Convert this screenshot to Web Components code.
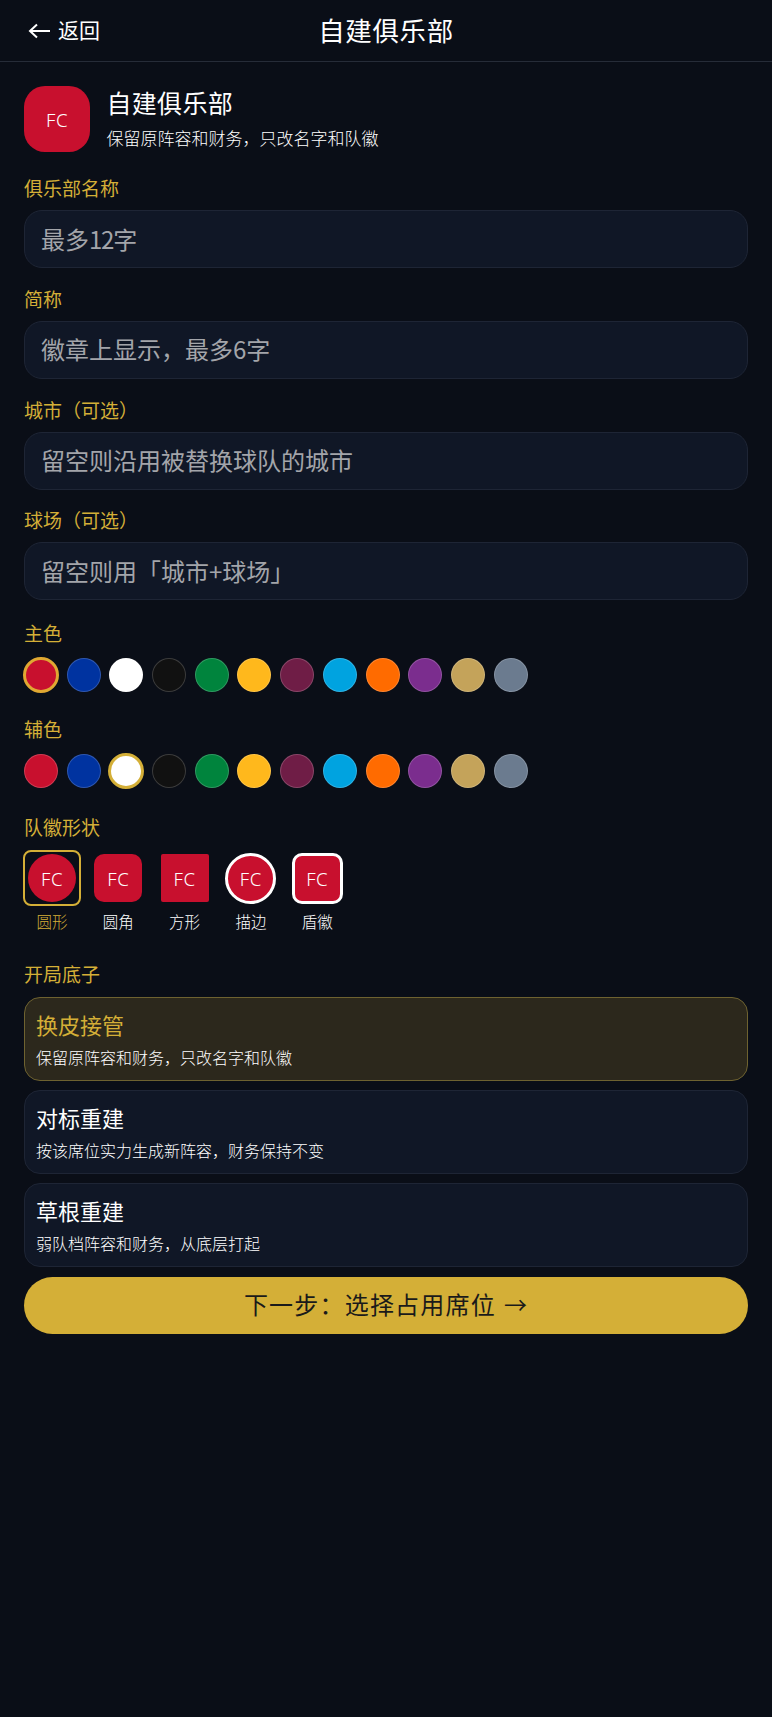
<!DOCTYPE html>
<html lang="zh-CN">
<head>
<meta charset="utf-8">
<title>自建俱乐部</title>
<style>
    html, body {
        margin: 0;
        background: #0a0e17;
    }
    body {
        min-height: 1717px;
        color: #fff;
        font-family: "Noto Sans CJK SC", "Noto Sans", sans-serif;
    }
    main {
        display: block;
        padding: 24px 24px 0;
    }
</style>
</head>
<body>
<top-bar back="返回">自建俱乐部</top-bar>
<main>
    <club-intro heading="自建俱乐部">保留原阵容和财务，只改名字和队徽</club-intro>

    <form-field label="俱乐部名称">最多<span style="letter-spacing: -1.2px">12</span>字</form-field>
    <form-field label="简称">徽章上显示，最多6字</form-field>
    <form-field label="城市（可选）">留空则沿用被替换球队的城市</form-field>
    <form-field label="球场（可选）">留空则用「城市+球场」</form-field>

    <color-row label="主色" selected="0" ring="#e0a832"></color-row>
    <color-row label="辅色" selected="2" ring="#d4af37"></color-row>

    <shape-picker label="队徽形状" selected="0"></shape-picker>

    <section-label style="margin-top: 28px">开局底子</section-label>
    <start-option heading="换皮接管" active>保留原阵容和财务，只改名字和队徽</start-option>
    <start-option heading="对标重建">按该席位实力生成新阵容，财务保持不变</start-option>
    <start-option heading="草根重建">弱队档阵容和财务，从底层打起</start-option>

    <next-button>下一步：选择占用席位<span slot="arrow">→</span></next-button>
</main>

<script>
const COLORS = ['#c8102e', '#0033a0', '#ffffff', '#111111', '#00843d', '#ffb81c',
    '#6f1d46', '#00a3e0', '#ff6b00', '#7b2d8e', '#c4a35a', '#6b7b8f'];
const SHAPES = [
    { name: '圆形', cls: 'circle' },
    { name: '圆角', cls: 'rounded' },
    { name: '方形', cls: 'square' },
    { name: '描边', cls: 'ring' },
    { name: '盾徽', cls: 'shield' }
];

class TopBar extends HTMLElement {
    constructor() {
        super();
        this.attachShadow({ mode: 'open' });
    }

    connectedCallback() {
        this.shadowRoot.innerHTML = `
            <style>
                :host {
                    display: grid;
                    grid-template-columns: 1fr auto 1fr;
                    align-items: center;
                    height: 61px;
                    padding: 0 28px;
                    border-bottom: 1px solid #262c38;
                }
                .back {
                    display: flex;
                    align-items: center;
                    gap: 8px;
                    font-size: 21px;
                }
                .back span {
                    margin-top: -3px;
                }
                svg {
                    width: 22px;
                    height: 16px;
                }
                .title {
                    font-size: 26.5px;
                    letter-spacing: .6px;
                    margin-top: -2px;
                }
            </style>
            <div class="back">
                <svg viewBox="0 0 22 16" fill="none" stroke="#fff" stroke-width="2">
                    <path d="M22 8H2M9 1.5 2 8l7 6.5"/>
                </svg>
                <span>${this.getAttribute('back')}</span>
            </div>
            <div class="title"><slot></slot></div>
        `;
    }
}

class ClubIntro extends HTMLElement {
    constructor() {
        super();
        this.attachShadow({ mode: 'open' });
    }

    connectedCallback() {
        this.shadowRoot.innerHTML = `
            <style>
                :host {
                    display: flex;
                    gap: 16.5px;
                    align-items: center;
                    height: 66px;
                    margin-bottom: 22px;
                }
                .logo {
                    width: 66px;
                    height: 66px;
                    border-radius: 21px;
                    background: #c8102e;
                    display: grid;
                    place-items: center;
                    font: 300 18.5px "Noto Sans", sans-serif;
                    letter-spacing: .6px;
                }
                .heading {
                    font-size: 25px;
                    line-height: 36px;
                    letter-spacing: .3px;
                    margin-top: -1px;
                }
                .sub {
                    font-size: 17px;
                    font-weight: 300;
                    line-height: 30px;
                    margin-top: 3px;
                }
            </style>
            <div class="logo">FC</div>
            <div>
                <div class="heading">${this.getAttribute('heading')}</div>
                <div class="sub"><slot></slot></div>
            </div>
        `;
    }
}

class SectionLabel extends HTMLElement {
    constructor() {
        super();
        this.attachShadow({ mode: 'open' });
        this.shadowRoot.innerHTML = `
            <style>
                :host {
                    display: block;
                    height: 28px;
                    line-height: 28px;
                    font-size: 19px;
                    color: #d4af37;
                    margin-bottom: 9px;
                }
            </style>
            <slot></slot>
        `;
    }
}

class FormField extends HTMLElement {
    constructor() {
        super();
        this.attachShadow({ mode: 'open' });
    }

    connectedCallback() {
        this.shadowRoot.innerHTML = `
            <style>
                :host {
                    display: block;
                    margin-bottom: 16.8px;
                }
                section-label {
                    margin-bottom: 8px;
                }
                .box {
                    box-sizing: border-box;
                    height: 58px;
                    padding: 0 16px 2px;
                    display: flex;
                    align-items: center;
                    background: #101726;
                    border: 1.5px solid #1e2535;
                    border-radius: 18px;
                    font-size: 24px;
                    color: #a3a5aa;
                }
            </style>
            <section-label>${this.getAttribute('label')}</section-label>
            <div class="box"><span><slot></slot></span></div>
        `;
    }
}

class ColorRow extends HTMLElement {
    constructor() {
        super();
        this.attachShadow({ mode: 'open' });
    }

    connectedCallback() {
        const selected = parseInt(this.getAttribute('selected'));
        const dots = COLORS.map((color, i) => {
            const cls = i === selected ? 'dot on' : 'dot';
            return `<span class="${cls}" style="background:${color}"></span>`;
        }).join('');
        this.shadowRoot.innerHTML = `
            <style>
                :host {
                    display: block;
                    margin-top: 18.6px;
                    margin-bottom: 23px;
                }
                section-label {
                    margin-bottom: 11px;
                }
                .row {
                    display: flex;
                    gap: 8.7px;
                }
                .dot {
                    box-sizing: border-box;
                    width: 34px;
                    height: 34px;
                    border-radius: 50%;
                    border: 1px solid rgba(255, 255, 255, .18);
                }
                .dot.on {
                    width: 36px;
                    height: 36px;
                    margin: -1px;
                    border: 3px solid ${this.getAttribute('ring')};
                }
            </style>
            <section-label>${this.getAttribute('label')}</section-label>
            <div class="row">${dots}</div>
        `;
    }
}

class ShapePicker extends HTMLElement {
    constructor() {
        super();
        this.attachShadow({ mode: 'open' });
    }

    connectedCallback() {
        const selected = parseInt(this.getAttribute('selected'));
        const items = SHAPES.map((shape, i) => `
            <div class="item ${i === selected ? 'on' : ''}">
                <div class="frame"><div class="badge ${shape.cls}">FC</div></div>
                <div class="name">${shape.name}</div>
            </div>
        `).join('');
        this.shadowRoot.innerHTML = `
            <style>
                :host {
                    display: block;
                    margin-top: 25px;
                }
                .row {
                    display: flex;
                    gap: 8.3px;
                    margin-left: -1px;
                }
                .item {
                    width: 58px;
                    text-align: center;
                }
                .frame {
                    box-sizing: border-box;
                    height: 56px;
                    padding-top: 1px;
                    display: grid;
                    place-items: center;
                    border: 2.5px solid transparent;
                    border-radius: 8px;
                }
                .on .frame {
                    border-color: #d4af37;
                }
                .badge {
                    box-sizing: border-box;
                    width: 48px;
                    height: 48px;
                    display: grid;
                    place-items: center;
                    background: #c8102e;
                    font: 300 18.5px "Noto Sans", sans-serif;
                    letter-spacing: .6px;
                }
                .circle { border-radius: 50%; }
                .rounded { border-radius: 10px; }
                .square { border-radius: 2px; }
                .ring, .shield {
                    width: 51px;
                    height: 51px;
                    border: 3.5px solid #fff;
                }
                .ring { border-radius: 50%; }
                .shield { border-radius: 10px; }
                .name {
                    margin-top: 4px;
                    font-size: 15.5px;
                    font-weight: 300;
                    line-height: 22px;
                }
                .on .name {
                    color: #d4af37;
                }
            </style>
            <section-label>${this.getAttribute('label')}</section-label>
            <div class="row">${items}</div>
        `;
    }
}

class StartOption extends HTMLElement {
    constructor() {
        super();
        this.attachShadow({ mode: 'open' });
    }

    connectedCallback() {
        this.shadowRoot.innerHTML = `
            <style>
                :host {
                    display: block;
                    box-sizing: border-box;
                    height: 84px;
                    margin-bottom: 9px;
                    padding: 9px 11px 0;
                    background: #101726;
                    border: 1.5px solid #1e2535;
                    border-radius: 16px;
                }
                :host([active]) {
                    background: #2c281c;
                    border-color: #6e6230;
                }
                .heading {
                    font-size: 22px;
                    line-height: 34px;
                }
                :host([active]) .heading {
                    color: #d4af37;
                }
                .sub {
                    font-size: 16px;
                    font-weight: 300;
                    line-height: 26px;
                    margin-top: 3px;
                }
            </style>
            <div class="heading">${this.getAttribute('heading')}</div>
            <div class="sub"><slot></slot></div>
        `;
    }
}

class NextButton extends HTMLElement {
    constructor() {
        super();
        this.attachShadow({ mode: 'open' });
        this.shadowRoot.innerHTML = `
            <style>
                :host {
                    display: flex;
                    align-items: center;
                    justify-content: center;
                    gap: 8px;
                    box-sizing: border-box;
                    height: 57px;
                    margin-top: 10px;
                    padding-bottom: 3px;
                    border-radius: 29px;
                    background: #d4af37;
                    color: #1a1a1a;
                    font-size: 24px;
                    letter-spacing: 1.2px;
                }
                ::slotted([slot="arrow"]) {
                    font-size: 23px;
                }
            </style>
            <slot></slot><slot name="arrow"></slot>
        `;
    }
}

customElements.define('section-label', SectionLabel);
customElements.define('top-bar', TopBar);
customElements.define('club-intro', ClubIntro);
customElements.define('form-field', FormField);
customElements.define('color-row', ColorRow);
customElements.define('shape-picker', ShapePicker);
customElements.define('start-option', StartOption);
customElements.define('next-button', NextButton);
</script>
</body>
</html>
